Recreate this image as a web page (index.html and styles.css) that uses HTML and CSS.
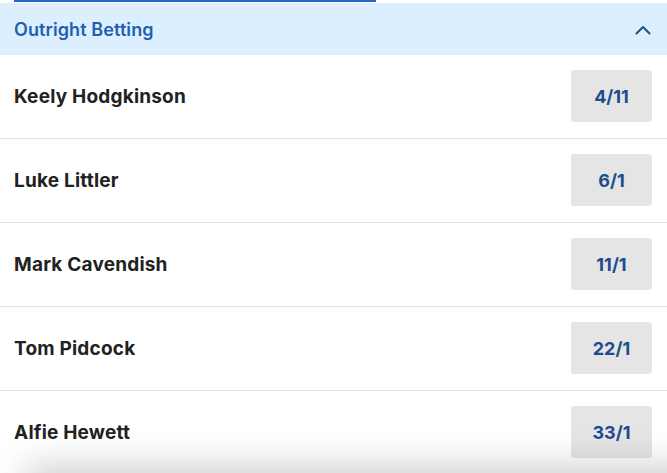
FILE: index.html
```html
<!DOCTYPE html>
<html lang="en">
<head>
<meta charset="utf-8">
<title>Outright Betting</title>
<link rel="stylesheet" href="styles.css">
</head>
<body>
<div class="page">
  <div class="tabstrip"><div class="tab-indicator"></div></div>
  <div class="header">
    <span class="header-title">Outright Betting</span>
    <svg class="chevron" width="16" height="10" viewBox="0 0 16 10"><path d="M1.5 8.5 L8 2 L14.5 8.5" fill="none" stroke="#1d4f91" stroke-width="2" stroke-linecap="round" stroke-linejoin="round"/></svg>
  </div>
  <div class="row"><span class="name">Keely Hodgkinson</span><span class="odds">4/11</span></div>
  <div class="row"><span class="name">Luke Littler</span><span class="odds">6/1</span></div>
  <div class="row"><span class="name">Mark Cavendish</span><span class="odds">11/1</span></div>
  <div class="row"><span class="name">Tom Pidcock</span><span class="odds">22/1</span></div>
  <div class="row"><span class="name">Alfie Hewett</span><span class="odds">33/1</span></div>
  <div class="bottom-shadow"></div>
</div>
</body>
</html>
```
FILE: styles.css
```css
html, body {
  margin: 0;
  padding: 0;
  background: #ffffff;
  overflow: hidden;
}
body {
  font-family: Inter, "Noto Sans", Arial, sans-serif;
  width: 667px;
  height: 473px;
}
.page {
  position: relative;
  width: 667px;
  height: 473px;
  overflow: hidden;
}
.tabstrip {
  height: 3px;
  background: #ffffff;
  padding-left: 14px;
}
.tab-indicator {
  width: 362px;
  height: 2px;
  background: #1f66c6;
}
.header {
  height: 52px;
  background: #dcefff;
  display: flex;
  align-items: center;
  justify-content: space-between;
  padding: 0 16px 0 14px;
}
.header-title {
  color: #1f5faf;
  font-size: 18px;
  font-weight: 600;
  letter-spacing: 0.1px;
}
.chevron {
  display: block;
  margin-top: 1px;
}
.row {
  height: 83px;
  border-bottom: 1px solid #e4e4e4;
  display: flex;
  align-items: center;
  justify-content: space-between;
  padding: 0 15px 0 14px;
}
.name {
  color: #222222;
  font-size: 19px;
  font-weight: 700;
  letter-spacing: 0.2px;
}
.odds {
  width: 81px;
  height: 52px;
  margin-top: -1px;
  background: #e5e5e5;
  border-radius: 3px;
  display: flex;
  align-items: center;
  justify-content: center;
  color: #1d4c8f;
  font-size: 18px;
  font-weight: 700;
}
.bottom-shadow {
  position: absolute;
  left: 40px;
  right: -60px;
  top: 480px;
  height: 30px;
  background: #c8c8c8;
  box-shadow: 0 0 36px 14px rgba(0, 0, 0, 0.2);
}
```
